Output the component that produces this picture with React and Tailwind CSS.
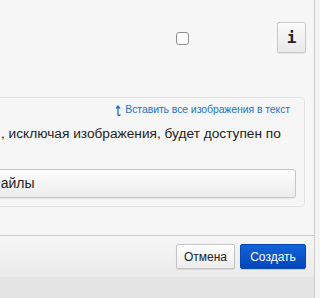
const App = () => {
  return (
    <div className="w-[320px] h-[298px] overflow-hidden flex bg-[#f4f4f4] font-['Liberation_Sans',Arial,sans-serif]">
      {/* Dialog column */}
      <div className="w-[314px] flex flex-col bg-[#e5e5e5]">
        {/* Body */}
        <div className="h-[235px] bg-[#f7f7f7]">
          {/* Top row */}
          <div className="flex items-start h-[97px]">
            <div className="w-[176px]"></div>
            <div className="mt-[32px] w-[13px] h-[13px] rounded-[3px] border border-[#8e8e8e] bg-white"></div>
            <div className="w-[88px]"></div>
            <button className="mt-[22px] w-[29px] h-[31px] rounded-[2px] border border-[#c9c9c9] bg-gradient-to-b from-[#fbfbfb] to-[#e9e9e9] shadow-[0_1px_1px_rgba(0,0,0,0.08)] flex items-center justify-center text-[#222] text-[16px] font-bold font-['DejaVu_Sans_Mono',monospace]">
              i
            </button>
          </div>

          {/* Panel */}
          <div className="-ml-[20px] mr-[9px] h-[110px] border border-[#e2e2e2] rounded-[4px] bg-[#f6f6f6] flex flex-col">
            <div className="flex justify-end items-center pr-[14px] pt-[4px] h-[20px]">
              <svg width="7" height="11" viewBox="0 0 7 11" className="mr-[3px]">
                <path d="M3 10 V1.5 M1 3.5 L3 1 L5 3.5 M3 10 Q3 10.5 5.5 10" stroke="#1e73c8" strokeWidth="1.3" fill="none" />
              </svg>
              <span className="text-[10.5px] text-[#1e73c8] tracking-[-0.1px]">Вставить все изображения в текст</span>
            </div>
            <div className="ml-[20px] mt-[7px] text-[13.7px] leading-[18px] text-[#222] whitespace-nowrap">
              , исключая изображения, будет доступен по
            </div>
            <div className="mt-[26px] mr-[8px] h-[29px] border border-[#c6c6c6] rounded-[3px] bg-gradient-to-b from-[#fdfdfd] to-[#ececec] shadow-[0_1px_1px_rgba(0,0,0,0.06)] flex items-center overflow-hidden">
              <span className="ml-[8px] text-[14px] text-[#222] whitespace-nowrap">Файлы</span>
            </div>
          </div>
        </div>

        {/* Footer */}
        <div className="h-[42px] border-t border-[#cfcfcf] bg-gradient-to-b from-[#f6f6f6] to-[#ebebeb] flex items-start justify-end pr-[8px] pt-[8px] gap-[5px]">
          <button className="w-[59px] h-[25px] rounded-[2px] border border-[#c4c4c4] bg-gradient-to-b from-[#ffffff] to-[#ececec] shadow-[0_1px_1px_rgba(0,0,0,0.1)] text-[12px] text-[#222]">
            Отмена
          </button>
          <button className="w-[66px] h-[25px] rounded-[2px] border border-[#0a47b0] bg-gradient-to-b from-[#1363d9] to-[#0346b9] shadow-[0_1px_1px_rgba(0,0,0,0.15)] text-[12px] text-white">
            Создать
          </button>
        </div>

        {/* Page background under dialog */}
        <div className="flex-1 bg-[#e4e4e4]"></div>
      </div>

      {/* Scroll edge */}
      <div className="w-[1px] bg-[#cdcdcd]"></div>
      <div className="flex-1 bg-[#f4f4f4]"></div>
    </div>
  );
};

export default App;
